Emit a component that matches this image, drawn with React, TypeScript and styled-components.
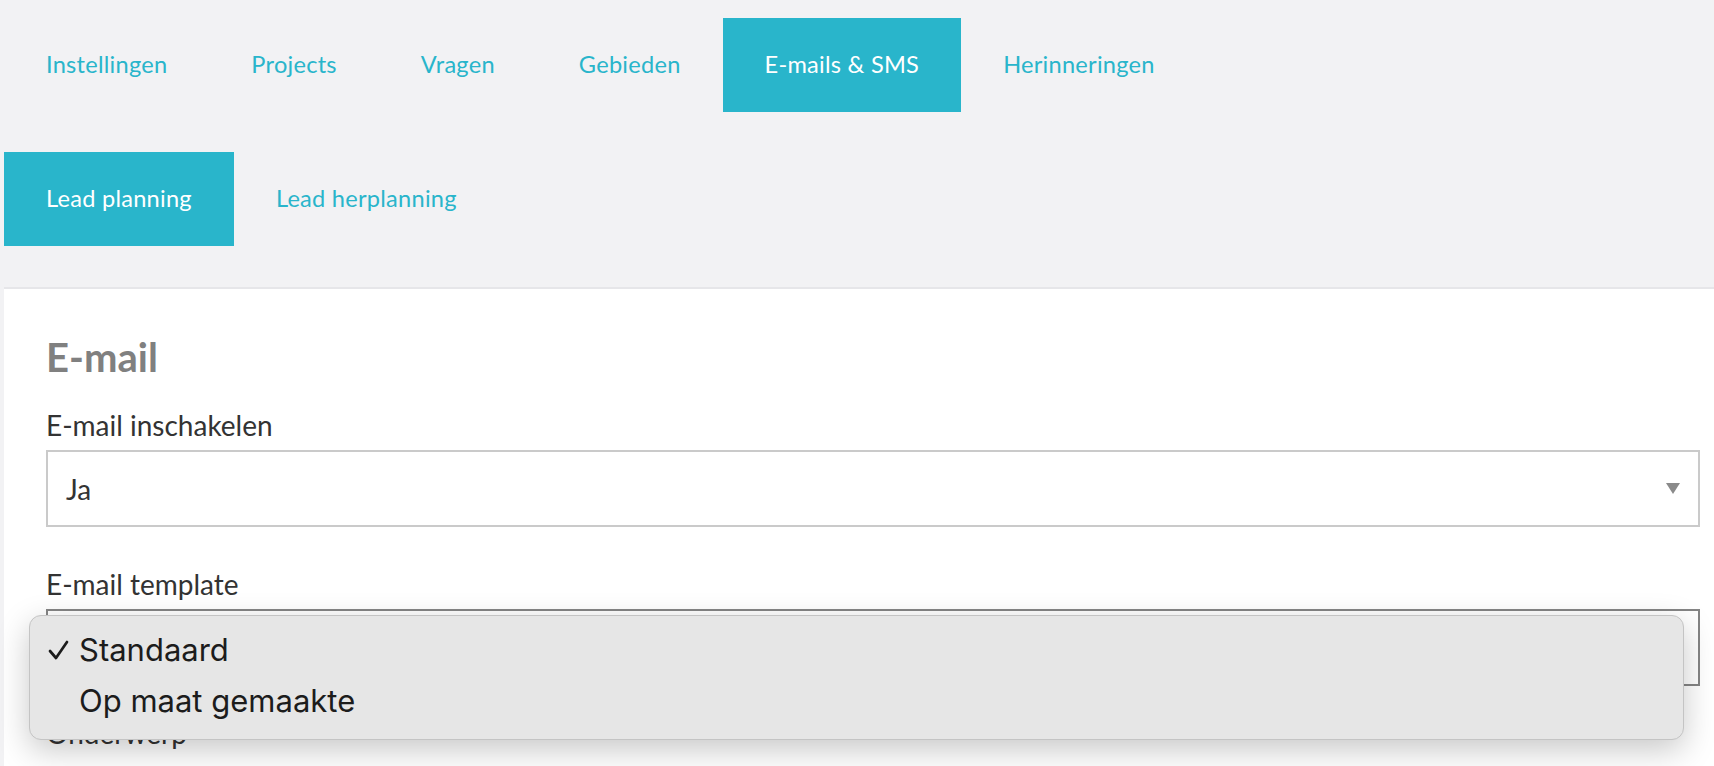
import styled, { createGlobalStyle } from "styled-components";

const GlobalStyle = createGlobalStyle`
  html, body {
    margin: 0;
    padding: 0;
    height: 100%;
    overflow: hidden;
    background-color: #f2f2f4;
    font-family: "Lato", "Liberation Sans", sans-serif;
  }
`;

const TEAL = "#29b5cb";

const Page = styled.div`
  padding: 18px 0 0 4px;
  height: 766px;
  box-sizing: border-box;
`;

const TabBar = styled.div<{ $top?: number }>`
  display: flex;
  flex-direction: row;
  height: 94px;
  margin-top: ${(p) => p.$top ?? 0}px;
`;

const Tab = styled.div<{ $active?: boolean }>`
  display: flex;
  align-items: center;
  padding: 0 42px 3px;
  font-size: 23.6px;
  letter-spacing: 0.25px;
  color: ${(p) => (p.$active ? "#ffffff" : TEAL)};
  background-color: ${(p) => (p.$active ? TEAL : "transparent")};
  cursor: pointer;
`;

const Panel = styled.div`
  position: relative;
  margin-top: 41px;
  padding: 43px 14px 0 42px;
  background-color: #ffffff;
  border-top: 2px solid #e6e6e9;
  height: 100%;
`;

const Heading = styled.h2`
  margin: 0;
  font-size: 40px;
  line-height: 50px;
  font-weight: 700;
  color: #808080;
`;

const Field = styled.div<{ $gap: number }>`
  margin-top: ${(p) => p.$gap}px;
`;

const Label = styled.div`
  font-size: 28px;
  line-height: 31px;
  color: #333333;
  margin-bottom: 9px;
`;

const SelectBox = styled.div<{ $focused?: boolean }>`
  height: 77px;
  box-sizing: border-box;
  display: flex;
  align-items: center;
  justify-content: space-between;
  padding: 0 18px 0 18px;
  border: 2px solid ${(p) => (p.$focused ? "#858585" : "#cacaca")};
  font-size: 28px;
  color: #333333;
`;

const Arrow = styled.span`
  width: 0;
  height: 0;
  border-left: 7.5px solid transparent;
  border-right: 7.5px solid transparent;
  border-top: 11px solid #8a8a8a;
`;

const Menu = styled.div`
  position: absolute;
  left: 25px;
  top: 326px;
  width: 1655px;
  height: 125px;
  box-sizing: border-box;
  padding-top: 8px;
  background-color: #e6e6e6;
  border: 1px solid #c4c4c4;
  border-radius: 12px;
  box-shadow: 0 10px 32px rgba(0, 0, 0, 0.22);
  font-family: "Inter", "Noto Sans", sans-serif;
`;

const Option = styled.div`
  display: flex;
  align-items: center;
  height: 51px;
  font-size: 31px;
  color: #1c1c1c;
`;

const Check = styled.span`
  width: 49px;
  display: flex;
  justify-content: flex-end;
  padding-right: 10px;
  box-sizing: border-box;
`;

const Tick = () => (
  <svg width="21" height="20" viewBox="0 0 21 20">
    <path
      d="M2 11 L8 18 L19 2"
      fill="none"
      stroke="#1c1c1c"
      strokeWidth="2.7"
      strokeLinecap="round"
      strokeLinejoin="round"
    />
  </svg>
);

const mainTabs = ["Instellingen", "Projects", "Vragen", "Gebieden", "E-mails & SMS", "Herinneringen"];
const subTabs = ["Lead planning", "Lead herplanning"];

const App = () => {
  return (
    <>
      <GlobalStyle />
      <Page>
        <TabBar>
          {mainTabs.map((t) => (
            <Tab key={t} $active={t === "E-mails & SMS"}>
              {t}
            </Tab>
          ))}
        </TabBar>
        <TabBar $top={40}>
          {subTabs.map((t) => (
            <Tab key={t} $active={t === "Lead planning"}>
              {t}
            </Tab>
          ))}
        </TabBar>
        <Panel>
          <Heading>E-mail</Heading>
          <Field $gap={28}>
            <Label>E-mail inschakelen</Label>
            <SelectBox>
              <span>Ja</span>
              <Arrow />
            </SelectBox>
          </Field>
          <Field $gap={42}>
            <Label>E-mail template</Label>
            <SelectBox $focused>
              <span>Standaard</span>
              <Arrow />
            </SelectBox>
          </Field>
          <Field $gap={32}>
            <Label>Onderwerp</Label>
          </Field>
          <Menu>
            <Option>
              <Check>
                <Tick />
              </Check>
              Standaard
            </Option>
            <Option>
              <Check />
              Op maat gemaakte
            </Option>
          </Menu>
        </Panel>
      </Page>
    </>
  );
};

export default App;
